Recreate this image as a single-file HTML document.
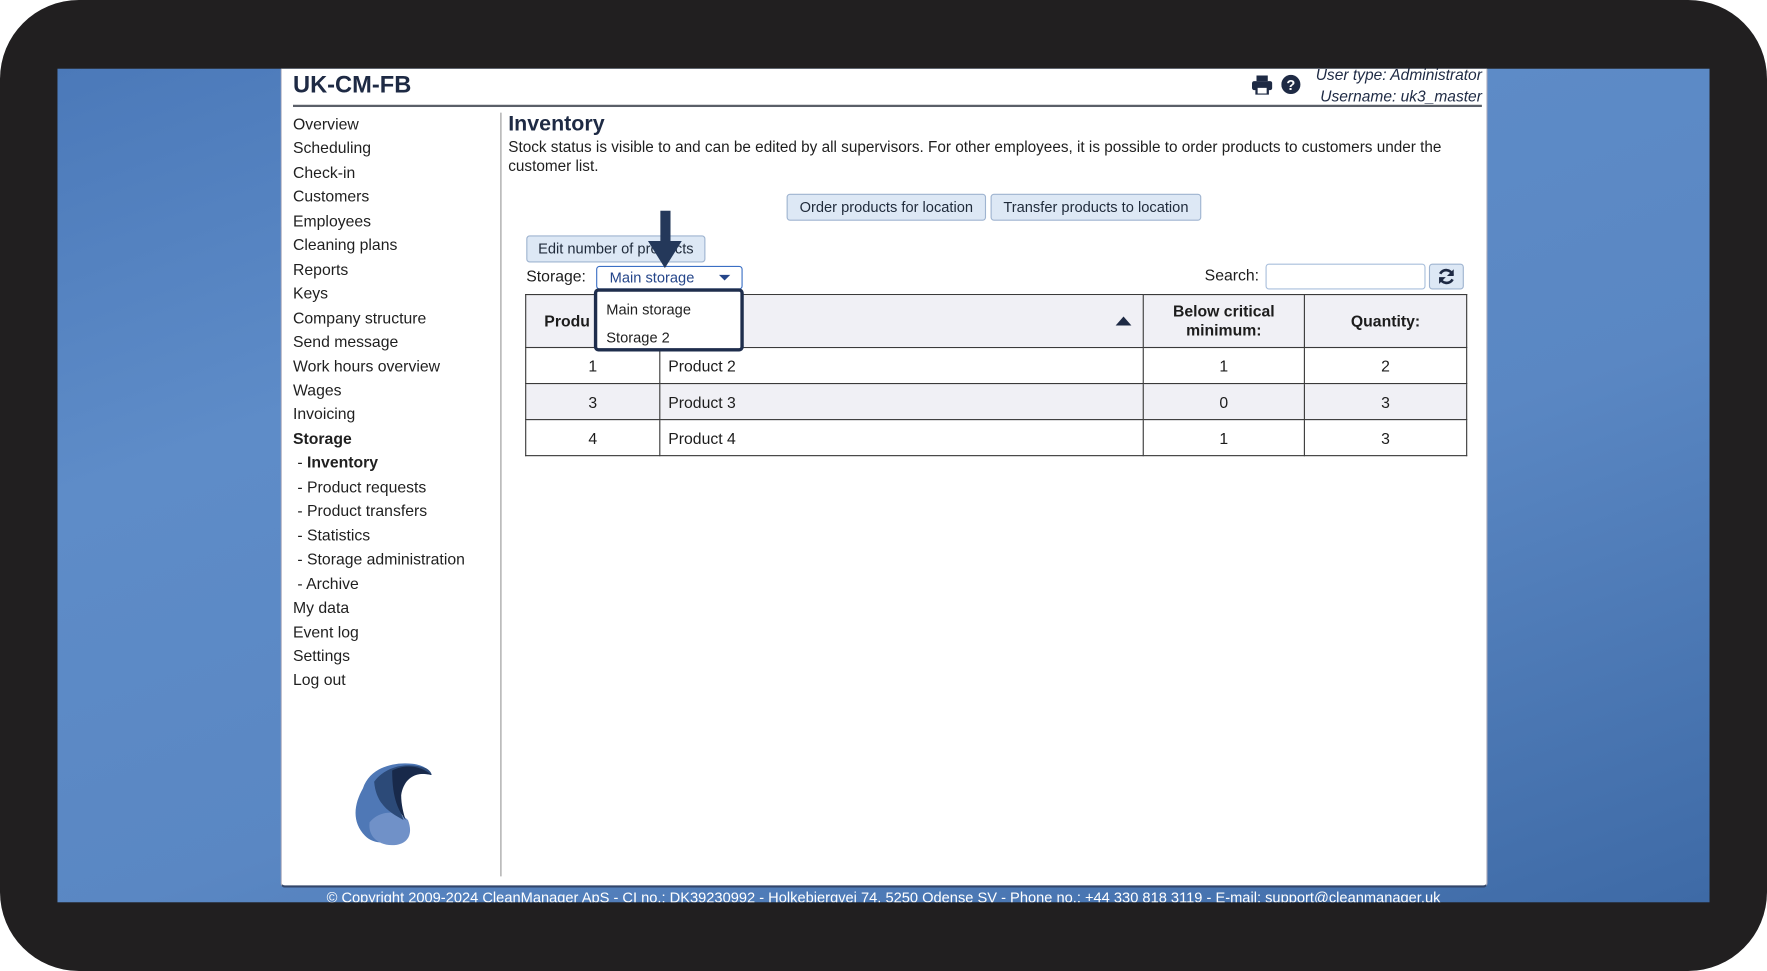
<!DOCTYPE html>
<html><head><meta charset="utf-8"><style>
html,body{margin:0;padding:0;background:#fff;overflow:hidden;width:1767px;height:971px}
#w{position:absolute;left:0;top:0;width:1767px;height:971px;overflow:hidden}
#s{position:absolute;left:0;top:0;width:1568px;height:862px;transform:scale(1.12691,1.12645);transform-origin:0 0;font-family:"Liberation Sans",sans-serif;color:#1c1c1c;overflow:hidden}
.a{position:absolute;white-space:nowrap}
.frame{position:absolute;left:0;top:0;width:1568px;height:862px;background:#211f20;border-radius:70px}
.blue{position:absolute;left:51px;top:61px;width:1466px;height:740px;background:linear-gradient(160deg,#4b79b9 0%,#5e8cc8 30%,#5a87c3 60%,#3e6aa6 100%);overflow:hidden}
.panel{position:absolute;left:249px;top:61px;width:1071px;height:727px;background:#fff;border-bottom:2px solid #33466a;border-left:1px solid #aab;border-right:1px solid #aab;border-radius:0 0 4px 4px;box-sizing:border-box}
.nav{position:absolute;left:260px;font-size:14px;color:#1f1f1f}
.btn{position:absolute;background:#dde8f5;border:1px solid #9fb4d0;border-radius:3px;font-size:13px;color:#1f2a3a;text-align:center;box-sizing:border-box;line-height:22px}
table{position:absolute;left:466px;top:261px;width:835px;border-collapse:collapse;font-size:14px;table-layout:fixed}
td,th{border:1px solid #3a3a3a;text-align:center;padding:0}
th{background:#f0f0f5;height:46px;font-weight:bold}
td{height:31px}
tr.g td{background:#f0f0f5}
</style></head><body><div id="w"><div id="s">
<div class="frame"></div>
<div class="blue"></div>
<div class="panel"></div>
<div class="a" style="left:260px;top:64px;font-size:21px;font-weight:bold;color:#1e2a44">UK-CM-FB</div>
<div class="a" style="left:260px;top:93px;width:1055px;height:2px;background:#5a5f68"></div>
<svg class="a" style="left:1111px;top:67px" width="18" height="17" viewBox="0 0 18 17"><rect x="4" y="0" width="10" height="5" fill="#1e2a44"/><rect x="0" y="5" width="18" height="8" rx="2" fill="#1e2a44"/><rect x="4" y="10" width="10" height="7" fill="#fff" stroke="#1e2a44" stroke-width="2"/></svg>
<svg class="a" style="left:1137px;top:66px" width="17" height="18" viewBox="0 0 17 18"><circle cx="8.5" cy="9" r="8.5" fill="#1e2a44"/><text x="8.5" y="14" font-size="13" font-weight="bold" fill="#fff" text-anchor="middle" font-family="Liberation Sans">?</text></svg>
<div class="a" style="right:253px;top:57px;font-size:13.8px;font-style:italic;color:#1e2a44;text-align:right;line-height:19px">User type: Administrator<br>Username: uk3_master</div>
<div class="nav" style="top:100px;line-height:21.45px">Overview<br>Scheduling<br>Check-in<br>Customers<br>Employees<br>Cleaning plans<br>Reports<br>Keys<br>Company structure<br>Send message<br>Work hours overview<br>Wages<br>Invoicing<br><b>Storage</b><br>&nbsp;- <b>Inventory</b><br>&nbsp;- Product requests<br>&nbsp;- Product transfers<br>&nbsp;- Statistics<br>&nbsp;- Storage administration<br>&nbsp;- Archive<br>My data<br>Event log<br>Settings<br>Log out</div>
<div class="a" style="left:444px;top:100px;width:1px;height:678px;background:#999"></div>
<svg class="a" style="left:308px;top:670px" width="80" height="85" viewBox="0 0 80 85"><path d="M14 30 C20 12 40 6 58 8 C68 9 74 14 75 18 C58 14 46 22 46 36 C46 52 50 62 52 70 C44 78 26 82 16 72 C4 60 6 44 14 30Z" fill="#4f78b6"/><path d="M20 60 C28 50 44 48 54 58 C58 68 56 78 44 80 C30 82 18 74 20 60Z" fill="#7091c8"/><path d="M24 24 C34 10 54 6 70 12 C74 14 75 17 75 18 C58 14 46 22 46 36 C46 44 48 52 50 58 C40 52 26 46 24 24Z" fill="#2c4a78"/><path d="M40 14 C52 8 66 10 75 18 C60 14 50 22 48 36 C48 44 50 52 52 58 C46 50 40 40 40 14Z" fill="#18294a"/></svg>
<div class="a" style="left:451px;top:100px;font-size:19px;font-weight:bold;color:#1e2a44">Inventory</div>
<div class="a" style="left:451px;top:122px;font-size:13.6px;line-height:17px;color:#1f1f1f;white-space:normal;width:862px">Stock status is visible to and can be edited by all supervisors. For other employees, it is possible to order products to customers under the customer list.</div>
<div class="btn" style="left:698px;top:172px;width:177px;height:24px">Order products for location</div>
<div class="btn" style="left:879px;top:172px;width:187px;height:24px">Transfer products to location</div>
<div class="btn" style="left:467px;top:209px;width:159px;height:24px">Edit number of products</div>
<div class="a" style="left:467px;top:237px;font-size:14px">Storage:</div>
<div class="a" style="left:529px;top:236px;width:130px;height:21px;border:1px solid #3b6fc4;border-radius:3px;box-sizing:border-box;background:#fff;font-size:13px;color:#25468a;line-height:19px;padding-left:11px">Main storage<span style="position:absolute;right:10px;top:7px;border-left:5px solid transparent;border-right:5px solid transparent;border-top:5px solid #25468a"></span></div>
<div class="a" style="left:1069px;top:236px;font-size:14px">Search:</div>
<div class="a" style="left:1123px;top:234px;width:142px;height:23px;border:1px solid #a9bfdc;border-radius:3px;box-sizing:border-box;background:#fff"></div>
<div class="btn" style="left:1268px;top:234px;width:31px;height:23px"></div>
<svg class="a" style="left:1275px;top:237px" width="17" height="17" viewBox="0 0 17 17"><path d="M14 7 A6 6 0 0 0 3 6" fill="none" stroke="#1e2a44" stroke-width="2.4"/><path d="M3 10 A6 6 0 0 0 14 11" fill="none" stroke="#1e2a44" stroke-width="2.4"/><path d="M15 2 L15 8 L9 8Z" fill="#1e2a44"/><path d="M2 15 L2 9 L8 9Z" fill="#1e2a44"/></svg>
<table>
<colgroup><col style="width:119px"><col style="width:429px"><col style="width:143px"><col style="width:144px"></colgroup>
<tr><th style="text-align:left;padding-left:16px">Produ</th><th style="position:relative"><span style="position:absolute;right:10px;top:19px;border-left:7px solid transparent;border-right:7px solid transparent;border-bottom:8px solid #1e2a44"></span></th><th style="line-height:17px">Below critical<br>minimum:</th><th>Quantity:</th></tr>
<tr><td>1</td><td style="text-align:left;padding-left:7px">Product 2</td><td>1</td><td>2</td></tr>
<tr class="g"><td>3</td><td style="text-align:left;padding-left:7px">Product 3</td><td>0</td><td>3</td></tr>
<tr><td>4</td><td style="text-align:left;padding-left:7px">Product 4</td><td>1</td><td>3</td></tr>
</table>
<div class="a" style="left:527px;top:256px;width:133px;height:56px;border:3px solid #1e2d4c;border-radius:4px;box-sizing:border-box;background:#fff;font-size:13px;line-height:25px;padding:3px 0 0 8px;color:#1f1f1f">Main storage<br>Storage 2</div>
<svg class="a" style="left:574px;top:187px" width="32" height="52" viewBox="0 0 32 52"><rect x="12" y="0" width="9" height="30" fill="#24385a"/><path d="M1 27 L31 27 L16 51Z" fill="#24385a"/></svg>
<div class="a" style="left:0;width:1568px;text-align:center;top:789px;font-size:13px;color:#fff;height:12px;overflow:hidden;line-height:16px">© Copyright 2009-2024 CleanManager ApS - CI no.: DK39230992 - Holkebjergvej 74, 5250 Odense SV - Phone no.: +44 330 818 3119 - E-mail: support@cleanmanager.uk</div>
</div></div></body></html>
